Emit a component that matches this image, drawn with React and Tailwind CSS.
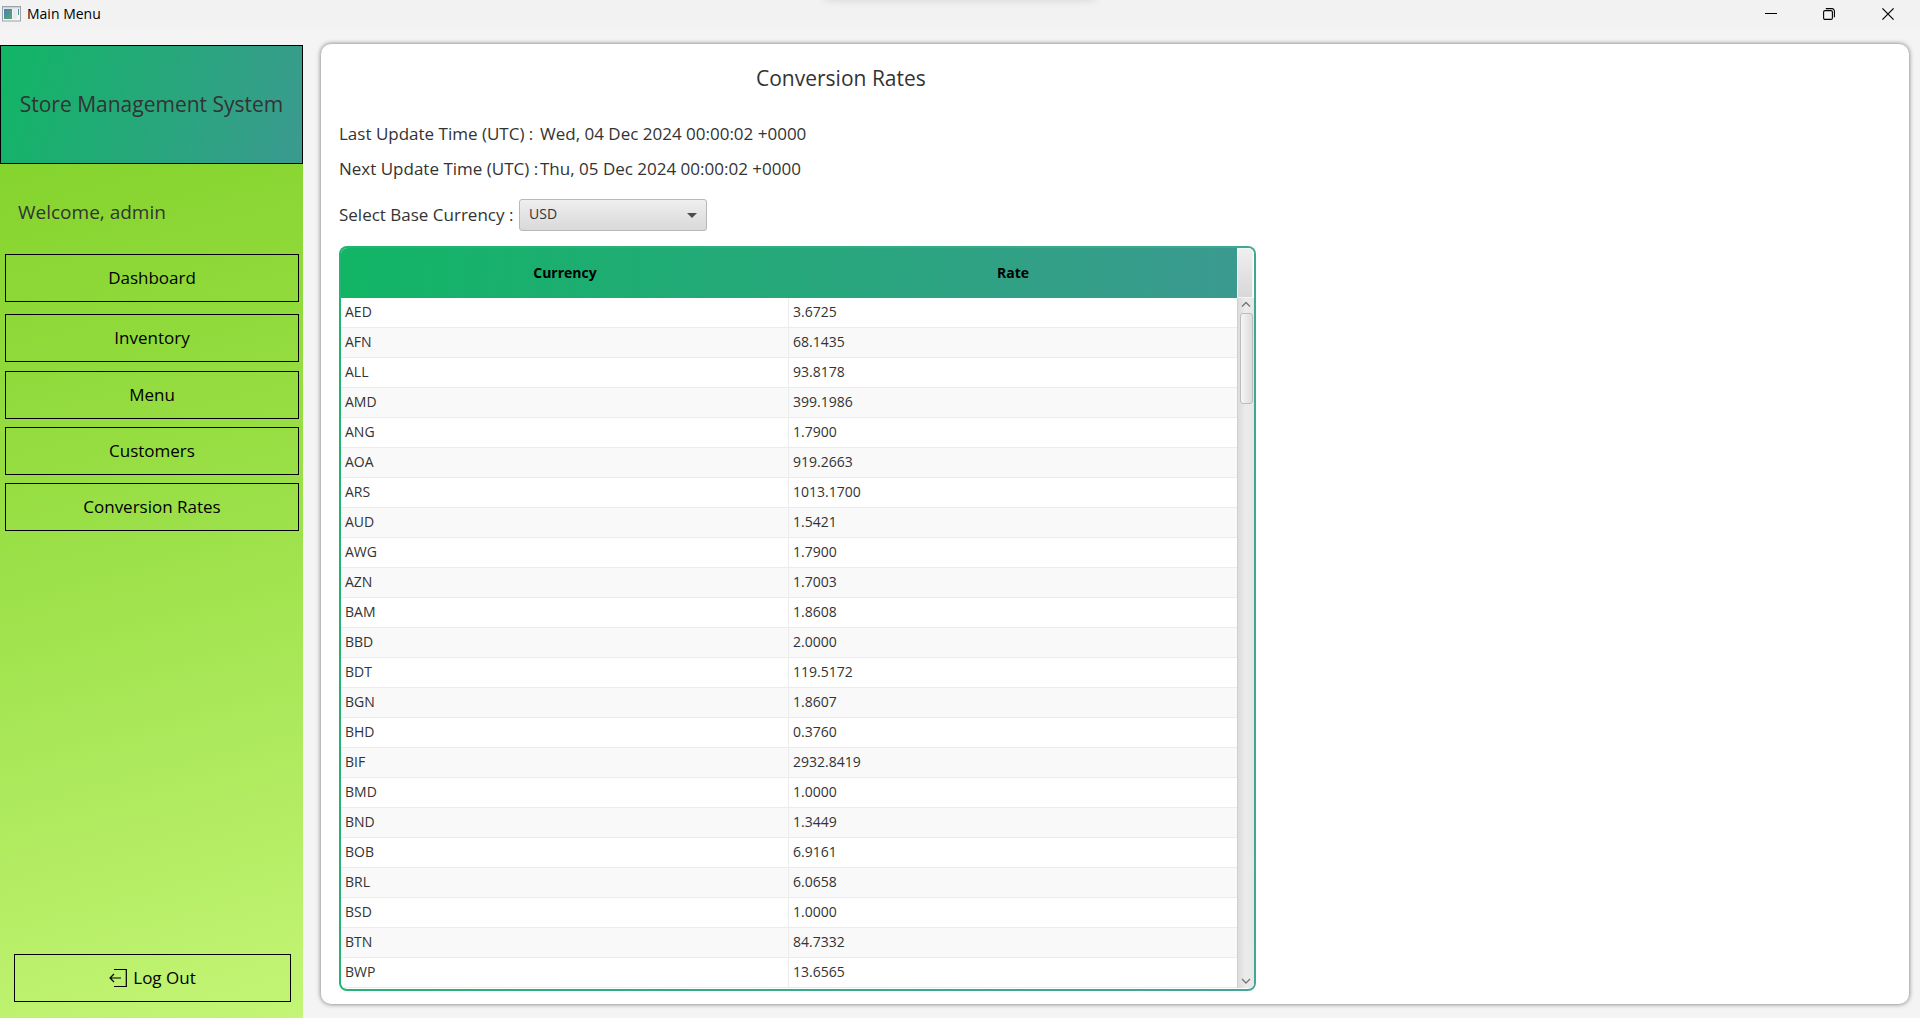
import React from "react";

const rates = [
  ["AED", "3.6725"],
  ["AFN", "68.1435"],
  ["ALL", "93.8178"],
  ["AMD", "399.1986"],
  ["ANG", "1.7900"],
  ["AOA", "919.2663"],
  ["ARS", "1013.1700"],
  ["AUD", "1.5421"],
  ["AWG", "1.7900"],
  ["AZN", "1.7003"],
  ["BAM", "1.8608"],
  ["BBD", "2.0000"],
  ["BDT", "119.5172"],
  ["BGN", "1.8607"],
  ["BHD", "0.3760"],
  ["BIF", "2932.8419"],
  ["BMD", "1.0000"],
  ["BND", "1.3449"],
  ["BOB", "6.9161"],
  ["BRL", "6.0658"],
  ["BSD", "1.0000"],
  ["BTN", "84.7332"],
  ["BWP", "13.6565"],
];

function TitleBar() {
  return (
    <header className="relative flex h-7 items-center overflow-hidden bg-[#f2f2f2]">
      <div className="absolute -top-4 left-1/2 h-4 w-[276px] -translate-x-1/2 rounded-b-lg shadow-[0_0_10px_rgba(0,0,0,0.12)]" />
      <svg className="ml-0.5 shrink-0" width="19" height="16" viewBox="0 0 19 16">
        <defs>
          <linearGradient id="winIcon" x1="0" y1="0" x2="1" y2="1">
            <stop offset="0" stopColor="#4a7fb0" />
            <stop offset="1" stopColor="#5aa870" />
          </linearGradient>
        </defs>
        <rect x="0.5" y="0.5" width="18" height="14.5" fill="#f4f6f7" stroke="#9aa3ab" />
        <rect x="1" y="1" width="17" height="1.5" fill="#c9d3da" />
        <rect x="2" y="3" width="8" height="10" fill="url(#winIcon)" />
        <rect x="11" y="3" width="4" height="10" fill="#e9ebec" />
        <rect x="16" y="3" width="1" height="6" fill="url(#winIcon)" />
      </svg>
      <span className="ml-1.5 text-sm text-black">Main Menu</span>
      <div className="ml-auto flex text-black">
        <button aria-label="Minimize" className="flex h-7 w-[58px] items-center justify-center">
          <svg width="12" height="12" viewBox="0 0 12 12"><path d="M0 5.5H12" stroke="currentColor" /></svg>
        </button>
        <button aria-label="Restore" className="flex h-7 w-[58px] items-center justify-center">
          <svg width="12" height="12" viewBox="0 0 12 12" fill="none" stroke="currentColor" strokeWidth="1.1">
            <rect x="0.6" y="2.6" width="8.8" height="8.8" rx="1.4" />
            <path d="M2.8 0.6H9A2.4 2.4 0 0 1 11.4 3V9.2" />
          </svg>
        </button>
        <button aria-label="Close" className="flex h-7 w-[62px] items-center justify-center pr-0.5">
          <svg width="12" height="12" viewBox="0 0 12 12"><path d="M0.4 0.4L11.6 11.6M11.6 0.4L0.4 11.6" stroke="currentColor" strokeWidth="1.2" /></svg>
        </button>
      </div>
    </header>
  );
}

function Sidebar() {
  const item = "h-12 w-full border border-black text-[17px] text-black";
  return (
    <aside className="flex w-[303px] shrink-0 flex-col bg-[linear-gradient(165deg,#7fd026_0%,#9be048_50%,#c4f576_100%)]">
      <div className="flex h-[119px] items-center justify-center border border-black bg-[linear-gradient(108deg,#11b565,#3b9a90)]">
        <h2 className="whitespace-nowrap text-[21px] text-[#333333]">Store Management System</h2>
      </div>
      <p className="mt-8 ml-[18px] text-[19px] leading-8 text-[#333333]">Welcome, admin</p>
      <nav className="mt-[26px] flex flex-col gap-2 pr-1 pl-[5px]">
        <button className={item + " mb-1"}>Dashboard</button>
        <button className={item + " mb-px"}>Inventory</button>
        <button className={item}>Menu</button>
        <button className={item}>Customers</button>
        <button className={item}>Conversion Rates</button>
      </nav>
      <div className="mt-auto mb-4 pr-3 pl-3.5">
        <button className="flex h-12 w-full items-center justify-center gap-1.5 border border-black text-[17px] text-black">
          <svg width="18" height="20" viewBox="0 0 18 20" fill="none" stroke="currentColor" strokeWidth="1.2">
            <path d="M5 1.5H17.3V18.5H5" />
            <path d="M12 10H1M5 6L1 10L5 14" />
          </svg>
          Log Out
        </button>
      </div>
    </aside>
  );
}

function ScrollBar() {
  return (
    <div className="flex w-[17px] shrink-0 flex-col bg-white">
      <div className="h-[50px] w-4 border border-[#f4f4f4] bg-linear-to-b from-[#efefef] to-[#d8d8d8]" />
      <div className="flex flex-1 flex-col items-center border-l border-[#d0d0d0] bg-linear-to-r from-[#dcdcdc] via-[#ececec] to-[#e6e6e6]">
        <svg className="mt-0.5 shrink-0" width="10" height="10" viewBox="0 0 10 10" fill="none" stroke="#777" strokeWidth="1.4">
          <path d="M1 6.5L5 2.5L9 6.5" />
        </svg>
        <div className="mt-[3px] h-[91px] w-[13px] rounded-[3px] border border-[#bcbcbc] bg-linear-to-r from-[#f6f6f6] to-[#dcdcdc]" />
        <svg className="mt-auto mb-0.5 shrink-0" width="10" height="10" viewBox="0 0 10 10" fill="none" stroke="#777" strokeWidth="1.4">
          <path d="M1 3L5 7L9 3" />
        </svg>
      </div>
    </div>
  );
}

function RatesTable() {
  return (
    <div className="w-[917px] max-w-full rounded-lg bg-[linear-gradient(108deg,#1fb56f,#45a597)] p-0.5">
      <div className="flex overflow-hidden rounded-md bg-white pb-px">
        <table className="min-w-0 flex-1 table-fixed border-separate border-spacing-0 text-sm text-[#333333]">
          <thead className="bg-[linear-gradient(93deg,#11b565,#3b9a90)]">
            <tr className="h-[50px]">
              <th className="w-1/2 p-0 font-bold text-black">Currency</th>
              <th className="w-1/2 p-0 font-bold text-black">Rate</th>
            </tr>
          </thead>
          <tbody>
            {rates.map(([code, rate]) => (
              <tr key={code} className="h-[30px] even:bg-[#f9f9f9]">
                <td className="border-r border-b border-[#ececec] p-0 pb-0.5 pl-1">{code}</td>
                <td className="border-b border-[#ececec] p-0 pb-0.5 pl-1">{rate}</td>
              </tr>
            ))}
          </tbody>
        </table>
        <ScrollBar />
      </div>
    </div>
  );
}

export default function App() {
  return (
    <div className="flex min-h-screen flex-col bg-[#f4f4f4] font-['Open_Sans',sans-serif]">
      <TitleBar />
      <div className="mt-[17px] flex flex-1">
        <Sidebar />
        <main className="-mt-px mr-[11px] mb-3.5 ml-[18px] flex-1 rounded-[10px] bg-white px-[18px] pb-3 text-[#333333] shadow-[0_0_5px_rgba(0,0,0,0.55)]">
          <h1 className="mt-[18px] ml-[417px] text-[21px] leading-8">Conversion Rates</h1>
          <dl className="mt-[22px] grid grid-cols-[201px_1fr] text-[17px] leading-[35px]">
            <dt>Last Update Time (UTC) :</dt>
            <dd>Wed, 04 Dec 2024 00:00:02 +0000</dd>
            <dt>Next Update Time (UTC) :</dt>
            <dd>Thu, 05 Dec 2024 00:00:02 +0000</dd>
          </dl>
          <div className="mt-[13px] mb-[15px] flex items-center">
            <label htmlFor="base" className="w-[180px] text-[17px]">Select Base Currency :</label>
            <div className="relative">
              <select id="base" className="block h-8 w-[188px] appearance-none rounded-[3px] border border-[#b8b8b8] bg-linear-to-b from-[#efefef] to-[#d9d9d9] pb-0.5 pl-[9px] text-sm">
                <option>USD</option>
              </select>
              <svg className="pointer-events-none absolute top-3.5 right-2.5" width="10" height="5" viewBox="0 0 10 5">
                <path d="M0 0H10L5 5Z" fill="#4d4d4d" />
              </svg>
            </div>
          </div>
          <RatesTable />
        </main>
      </div>
    </div>
  );
}
